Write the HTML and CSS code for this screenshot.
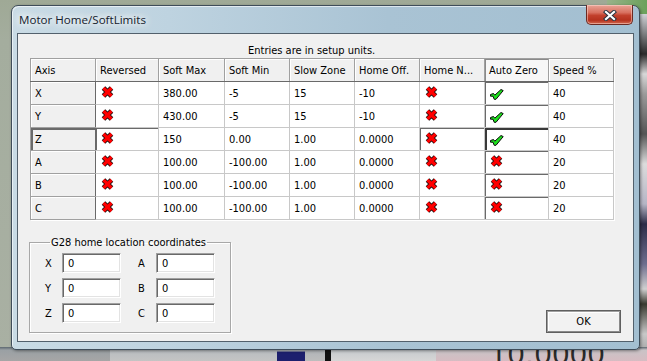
FILE: index.html
```html
<!DOCTYPE html>
<html>
<head>
<meta charset="utf-8">
<link rel="stylesheet" href="styles.css">
</head>
<body>
<div class="desktop">
  <div class="bg-green"></div>
  <div class="bg-right"></div>
  <div class="bg-bottom">
    <span class="bb b1"></span><span class="bb b2"></span><span class="bb b3"></span><span class="bb b4"></span><span class="bb b5"></span><span class="bb b6"></span><span class="bb b7"></span>
  </div>
  <div class="bg-big">10.0000</div>

  <div class="window">
    <div class="titlebar">
      <span class="title">Motor Home/SoftLimits</span>
      <button class="close" aria-label="Close">
        <svg width="16" height="11" viewBox="0 0 16 11"><path d="M4 2 L12 9 M12 2 L4 9" stroke="#2b3440" stroke-width="4.2" stroke-linecap="square"/><path d="M4 2 L12 9 M12 2 L4 9" stroke="#fff" stroke-width="2.2" stroke-linecap="square"/></svg>
      </button>
    </div>
    <div class="client">
      <div class="note">Entries are in setup units.</div>
      <table class="grid">
        <colgroup>
          <col class="c65"><col class="c63"><col class="c66"><col class="c65"><col class="c65"><col class="c65"><col class="c65"><col class="c64"><col class="c65">
        </colgroup>
        <thead>
          <tr>
            <th>Axis</th><th>Reversed</th><th>Soft Max</th><th>Soft Min</th><th>Slow Zone</th><th>Home Off.</th><th>Home N...</th><th class="az-h">Auto Zero</th><th>Speed %</th>
          </tr>
        </thead>
        <tbody>
          <tr>
            <td class="axis">X</td>
            <td class="ico"><svg class="x" width="13" height="12" viewBox="0 0 13 12"><path d="M2.5 2 L10.5 10 M10.5 2 L2.5 10" stroke="#111" stroke-width="5"/><path d="M2.5 2 L10.5 10 M10.5 2 L2.5 10" stroke="#f00" stroke-width="3.2"/></svg></td>
            <td>380.00</td><td>-5</td><td>15</td><td>-10</td>
            <td class="ico"><svg class="x" width="13" height="12" viewBox="0 0 13 12"><path d="M2.5 2 L10.5 10 M10.5 2 L2.5 10" stroke="#111" stroke-width="5"/><path d="M2.5 2 L10.5 10 M10.5 2 L2.5 10" stroke="#f00" stroke-width="3.2"/></svg></td>
            <td class="ico sunk"><svg class="v" width="14" height="11" viewBox="0 0 14 11"><path d="M0.5 5.5 L3.5 4.5 L4.8 6.2 L11 0.5 L13.2 1.6 L6 10.3 L4.2 10.3 L3 7.2 L0.5 7.2 Z" fill="#1de01d" stroke="#0a0a0a" stroke-width="1" stroke-linejoin="round"/></svg></td>
            <td>40</td>
          </tr>
          <tr>
            <td class="axis">Y</td>
            <td class="ico"><svg class="x" width="13" height="12" viewBox="0 0 13 12"><path d="M2.5 2 L10.5 10 M10.5 2 L2.5 10" stroke="#111" stroke-width="5"/><path d="M2.5 2 L10.5 10 M10.5 2 L2.5 10" stroke="#f00" stroke-width="3.2"/></svg></td>
            <td>430.00</td><td>-5</td><td>15</td><td>-10</td>
            <td class="ico"><svg class="x" width="13" height="12" viewBox="0 0 13 12"><path d="M2.5 2 L10.5 10 M10.5 2 L2.5 10" stroke="#111" stroke-width="5"/><path d="M2.5 2 L10.5 10 M10.5 2 L2.5 10" stroke="#f00" stroke-width="3.2"/></svg></td>
            <td class="ico sunk"><svg class="v" width="14" height="11" viewBox="0 0 14 11"><path d="M0.5 5.5 L3.5 4.5 L4.8 6.2 L11 0.5 L13.2 1.6 L6 10.3 L4.2 10.3 L3 7.2 L0.5 7.2 Z" fill="#1de01d" stroke="#0a0a0a" stroke-width="1" stroke-linejoin="round"/></svg></td>
            <td>40</td>
          </tr>
          <tr>
            <td class="axis sunk">Z</td>
            <td class="ico sunk"><svg class="x" width="13" height="12" viewBox="0 0 13 12"><path d="M2.5 2 L10.5 10 M10.5 2 L2.5 10" stroke="#111" stroke-width="5"/><path d="M2.5 2 L10.5 10 M10.5 2 L2.5 10" stroke="#f00" stroke-width="3.2"/></svg></td>
            <td>150</td><td>0.00</td><td>1.00</td><td>0.0000</td>
            <td class="ico sunk"><svg class="x" width="13" height="12" viewBox="0 0 13 12"><path d="M2.5 2 L10.5 10 M10.5 2 L2.5 10" stroke="#111" stroke-width="5"/><path d="M2.5 2 L10.5 10 M10.5 2 L2.5 10" stroke="#f00" stroke-width="3.2"/></svg></td>
            <td class="ico sunk focus"><svg class="v" width="14" height="11" viewBox="0 0 14 11"><path d="M0.5 5.5 L3.5 4.5 L4.8 6.2 L11 0.5 L13.2 1.6 L6 10.3 L4.2 10.3 L3 7.2 L0.5 7.2 Z" fill="#1de01d" stroke="#0a0a0a" stroke-width="1" stroke-linejoin="round"/></svg></td>
            <td>40</td>
          </tr>
          <tr>
            <td class="axis">A</td>
            <td class="ico"><svg class="x" width="13" height="12" viewBox="0 0 13 12"><path d="M2.5 2 L10.5 10 M10.5 2 L2.5 10" stroke="#111" stroke-width="5"/><path d="M2.5 2 L10.5 10 M10.5 2 L2.5 10" stroke="#f00" stroke-width="3.2"/></svg></td>
            <td>100.00</td><td>-100.00</td><td>1.00</td><td>0.0000</td>
            <td class="ico"><svg class="x" width="13" height="12" viewBox="0 0 13 12"><path d="M2.5 2 L10.5 10 M10.5 2 L2.5 10" stroke="#111" stroke-width="5"/><path d="M2.5 2 L10.5 10 M10.5 2 L2.5 10" stroke="#f00" stroke-width="3.2"/></svg></td>
            <td class="ico sunk"><svg class="x" width="13" height="12" viewBox="0 0 13 12"><path d="M2.5 2 L10.5 10 M10.5 2 L2.5 10" stroke="#111" stroke-width="5"/><path d="M2.5 2 L10.5 10 M10.5 2 L2.5 10" stroke="#f00" stroke-width="3.2"/></svg></td>
            <td>20</td>
          </tr>
          <tr>
            <td class="axis">B</td>
            <td class="ico"><svg class="x" width="13" height="12" viewBox="0 0 13 12"><path d="M2.5 2 L10.5 10 M10.5 2 L2.5 10" stroke="#111" stroke-width="5"/><path d="M2.5 2 L10.5 10 M10.5 2 L2.5 10" stroke="#f00" stroke-width="3.2"/></svg></td>
            <td>100.00</td><td>-100.00</td><td>1.00</td><td>0.0000</td>
            <td class="ico"><svg class="x" width="13" height="12" viewBox="0 0 13 12"><path d="M2.5 2 L10.5 10 M10.5 2 L2.5 10" stroke="#111" stroke-width="5"/><path d="M2.5 2 L10.5 10 M10.5 2 L2.5 10" stroke="#f00" stroke-width="3.2"/></svg></td>
            <td class="ico sunk"><svg class="x" width="13" height="12" viewBox="0 0 13 12"><path d="M2.5 2 L10.5 10 M10.5 2 L2.5 10" stroke="#111" stroke-width="5"/><path d="M2.5 2 L10.5 10 M10.5 2 L2.5 10" stroke="#f00" stroke-width="3.2"/></svg></td>
            <td>20</td>
          </tr>
          <tr>
            <td class="axis">C</td>
            <td class="ico"><svg class="x" width="13" height="12" viewBox="0 0 13 12"><path d="M2.5 2 L10.5 10 M10.5 2 L2.5 10" stroke="#111" stroke-width="5"/><path d="M2.5 2 L10.5 10 M10.5 2 L2.5 10" stroke="#f00" stroke-width="3.2"/></svg></td>
            <td>100.00</td><td>-100.00</td><td>1.00</td><td>0.0000</td>
            <td class="ico"><svg class="x" width="13" height="12" viewBox="0 0 13 12"><path d="M2.5 2 L10.5 10 M10.5 2 L2.5 10" stroke="#111" stroke-width="5"/><path d="M2.5 2 L10.5 10 M10.5 2 L2.5 10" stroke="#f00" stroke-width="3.2"/></svg></td>
            <td class="ico sunk"><svg class="x" width="13" height="12" viewBox="0 0 13 12"><path d="M2.5 2 L10.5 10 M10.5 2 L2.5 10" stroke="#111" stroke-width="5"/><path d="M2.5 2 L10.5 10 M10.5 2 L2.5 10" stroke="#f00" stroke-width="3.2"/></svg></td>
            <td>20</td>
          </tr>
        </tbody>
      </table>

      <div class="bottom">
        <fieldset class="group">
          <legend>G28 home location coordinates</legend>
          <div class="coord-row"><span class="lbl">X</span><span class="field">0</span><span class="lbl lbl2">A</span><span class="field">0</span></div>
          <div class="coord-row"><span class="lbl">Y</span><span class="field">0</span><span class="lbl lbl2">B</span><span class="field">0</span></div>
          <div class="coord-row"><span class="lbl">Z</span><span class="field">0</span><span class="lbl lbl2">C</span><span class="field">0</span></div>
        </fieldset>
        <button class="ok">OK</button>
      </div>
    </div>
  </div>
</div>
</body>
</html>
```
FILE: styles.css
```css
* { box-sizing: border-box; }
html, body { margin: 0; padding: 0; }
body {
  width: 647px;
  height: 361px;
  overflow: hidden;
  background: #a2ab9b;
  font-family: "DejaVu Sans Condensed", "Liberation Sans", sans-serif;
  font-size: 11px;
  color: #000;
}
.desktop {
  position: relative;
  width: 647px;
  height: 361px;
  background: linear-gradient(to bottom, #9fa996 0px, #a4ad9e 40px, #a9b0a3 361px);
}
.bg-green {
  position: absolute;
  right: 0; top: 0;
  width: 40px; height: 14px;
  background: linear-gradient(to right, #98b28a, #6aa15a);
}
.bg-right {
  position: absolute;
  right: 0; top: 14px;
  width: 12px; height: 347px;
  background: linear-gradient(to bottom, #cfd2d6 0px, #2a2a2a 40px, #d8d8d8 60px, #9a9a9a 80px, #555 120px, #dcdcdc 150px, #b5b5c5 190px, #2c2c48 210px, #6e6e8e 250px, #d0d0d0 275px, #3a3a30 290px, #c8c8c8 320px, #7a7a7a 361px);
}
.bg-bottom {
  position: absolute;
  left: 0; bottom: 0;
  width: 647px; height: 14px;
  display: flex;
}
.bb { display: block; height: 14px; }
.b1 { width: 110px; background: linear-gradient(#5d6870, #9aa0a4 3px, #a6a6a6); }
.b2 { width: 167px; background: linear-gradient(#5d6870, #b8bcc0 3px, #c4c4c4); }
.b3 { width: 28px; background: linear-gradient(#5d6870 0px, #bfc3c7 4px, #1d1f6e 5px, #1d1f6e); }
.b4 { width: 20px; background: linear-gradient(#5d6870, #b0b4b8 3px, #bdbdbd); }
.b5 { width: 6px; background: #111; }
.b6 { width: 105px; background: linear-gradient(#5d6870, #c6cacd 3px, #d6d6d6); }
.b7 { flex: 1; background: linear-gradient(#5d6870, #c9c3c6 3px, #d6bcc2); }
.bg-big {
  position: absolute;
  left: 490px; top: 337px;
  font-family: "Liberation Sans", sans-serif;
  font-size: 30px;
  line-height: 34px;
  color: #2a2a2a;
  letter-spacing: 1px;
}

/* window */
.window {
  position: absolute;
  left: 11px; top: 5px;
  width: 629px; height: 345px;
  border: 1px solid #3f4d5a;
  border-radius: 7px 7px 5px 5px;
  background: linear-gradient(to right, #c9dbe5 0%, #bed3e0 25%, #a9c3d4 60%, #a3bfd1 100%);
  box-shadow: inset 1px 1px 0 rgba(255,255,255,0.6), 1px 1px 3px rgba(0,0,0,0.4);
  display: flex;
  flex-direction: column;
  padding: 0 5px 7px 5px;
}
.titlebar {
  height: 27px;
  flex: none;
  display: flex;
  align-items: center;
  position: relative;
}
.title {
  font-family: "Open Sans", "Noto Sans", sans-serif;
  font-size: 11.6px;
  color: #14202c;
  padding-left: 2px;
  margin-top: -1px;
  text-shadow: 0 0 6px #fff, 0 0 10px #fff, 0 0 12px rgba(255,255,255,0.9);
}
.close {
  position: absolute;
  right: 1px; top: -1px;
  width: 47px; height: 20px;
  padding: 0;
  border: 1px solid #6b2a22;
  border-top: none;
  border-radius: 0 0 5px 5px;
  background: linear-gradient(to bottom, #e9a598 0%, #d8705f 40%, #c2402c 55%, #b5321e 80%, #d26a50 100%);
  box-shadow: inset 0 0 0 1px rgba(255,220,210,0.5);
  display: flex;
  align-items: center;
  justify-content: center;
}
.close svg { display: block; margin-top: 1px; }

.client {
  flex: 1;
  border: 1px solid #52606c;
  background: #f0f0f0;
  display: flex;
  flex-direction: column;
}
.note {
  height: 24px;
  padding: 10px 0 0 230px;
  line-height: 13px;
  white-space: nowrap;
}

/* table */
.grid {
  margin-left: 12px;
  width: 584px;
  table-layout: fixed;
  border-collapse: collapse;
  border: 1px solid #a0a0a0;
  box-shadow: 1px 1px 0 #fff;
}
.c63 { width: 63px; }
.c64 { width: 64px; }
.c65 { width: 65px; }
.c66 { width: 66px; }
.grid th, .grid td {
  height: 23px;
  padding: 0 0 0 4px;
  text-align: left;
  font-weight: normal;
  white-space: nowrap;
  overflow: hidden;
  border: 1px solid #c8c8c8;
  vertical-align: middle;
  line-height: 13px;
}
.grid th {
  background: #f0f0f0;
  border-color: #a0a0a0;
  border-bottom: 1px solid #696969;
  box-shadow: inset 1px 1px 0 #fff;
}
.grid th.az-h {
  background: #f7f7f7;
  box-shadow: inset 1px 1px 0 #8a8a8a;
}
.grid td { background: #fff; }
.grid td.axis {
  background: #f0f0f0;
  border-color: #a0a0a0;
  border-right: 1px solid #696969;
  box-shadow: inset 1px 1px 0 #fff;
}
.grid td.axis.sunk {
  box-shadow: inset 2px 2px 0 #6a6a6a;
}
.grid td.ico {
  vertical-align: top;
  padding: 4px 0 0 5px;
}
.grid td.sunk {
  box-shadow: inset 1px 1px 0 #6a6a6a;
}
.grid td.focus {
  box-shadow: inset 2px 2px 0 #3a3a3a;
}
.grid svg { display: block; }
.grid svg.v { margin-top: 3px; margin-left: 0; }

/* bottom */
.bottom {
  flex: 1;
  display: flex;
  justify-content: space-between;
  align-items: flex-end;
  padding: 0 12px 8px 11px;
}
.group {
  margin: 0;
  width: 202px;
  height: 97px;
  border: 1px solid #a8a8a8;
  box-shadow: 1px 1px 0 #fff, inset 1px 1px 0 #fff;
  padding: 4px 0 0 14px;
  display: flex;
  flex-direction: column;
  gap: 5px;
}
.group legend {
  margin-left: 6px;
  padding: 0 1px;
  line-height: 13px;
  white-space: nowrap;
}
.coord-row {
  display: flex;
  align-items: center;
  height: 20px;
}
.lbl {
  width: 18px;
  padding-left: 1px;
}
.lbl2 {
  width: 35px;
  padding-left: 17px;
}
.field {
  width: 59px;
  height: 20px;
  background: #fff;
  border: 1px solid;
  border-color: #a0a0a0 #fff #fff #a0a0a0;
  box-shadow: inset 1px 1px 0 #696969, inset -1px -1px 0 #e3e3e3;
  padding: 3px 0 0 5px;
  line-height: 13px;
}
.ok {
  width: 75px;
  height: 23px;
  margin-bottom: 0;
  font-family: "DejaVu Sans Condensed", "Liberation Sans", sans-serif;
  font-size: 11px;
  color: #000;
  background: #f2f2f2;
  border: 1px solid #5f5f5f;
  box-shadow: inset 1px 1px 0 #a0a0a0, inset -1px -1px 0 #8a8a8a, inset 2px 2px 0 #fff;
  padding: 0;
}
```
